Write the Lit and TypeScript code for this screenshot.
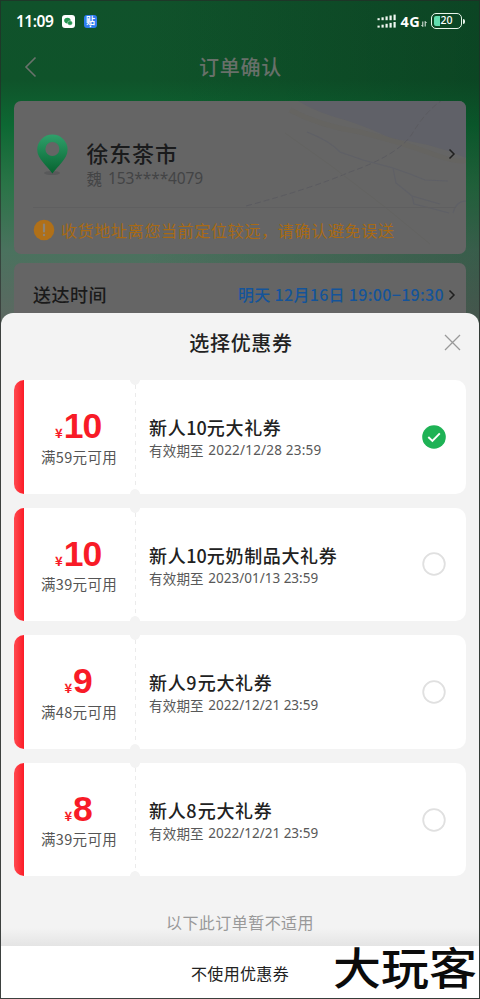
import { LitElement, html, css, svg } from "lit";
import { customElement } from "lit/decorators.js";

const BASE_FONT = css`"Noto Sans CJK SC", "Noto Sans", sans-serif`;

interface Coupon {
  amount: number;
  threshold: number;
  name: [string, string, string];
  expires: string;
}

const COUPONS: Coupon[] = [
  { amount: 10, threshold: 59, name: ["新人", "10", "元大礼券"], expires: "2022/12/28 23:59" },
  { amount: 10, threshold: 39, name: ["新人", "10", "元奶制品大礼券"], expires: "2023/01/13 23:59" },
  { amount: 9, threshold: 48, name: ["新人", "9", "元大礼券"], expires: "2022/12/21 23:59" },
  { amount: 8, threshold: 39, name: ["新人", "8", "元大礼券"], expires: "2022/12/21 23:59" },
];

@customElement("status-bar")
class StatusBar extends LitElement {
  static styles = css`
    :host { display: flex; align-items: center; height: 42px; padding: 0 15px 0 16px; box-sizing: border-box; color: #fff; }
    .time { font: 600 15.5px/20px "Noto Sans", sans-serif; letter-spacing: -0.5px; width: 46px; white-space: nowrap; }
    .app { display: block; width: 13px; height: 13px; }
    .wechat { margin: 0 9px 0 0; }
    .grow { flex: 1; }
    .signal { display: block; width: 20px; height: 16px; margin-right: 4px; }
    .net { font: 700 14.5px/20px "Noto Sans", sans-serif; letter-spacing: 0.3px; }
    .updown { display: block; width: 6px; height: 8px; margin: 5px 4px 0 1px; }
    .battery { display: flex; align-items: center; }
    .cell { box-sizing: border-box; width: 31px; height: 16px; border: 1.5px solid #e8f5ea; border-radius: 5px; padding: 1.5px; position: relative; }
    .level { width: 6px; height: 10px; border-radius: 2px 0 0 2px; background: #62dcae; }
    .pct { position: absolute; inset: 0; font: 500 10.5px/13px "Noto Sans", sans-serif; text-align: center; }
    .tip { width: 2px; height: 5px; margin-left: 1px; border-radius: 0 2px 2px 0; background: #e8f5ea; }
    .tag { font: 700 9px "Noto Sans CJK SC", sans-serif; }
  `;
  render() {
    const bars = [0, 1, 2, 3, 4];
    return html`
      <span class="time">11:09</span>
      <svg class="app wechat" viewBox="0 0 13 13">
        <rect width="13" height="13" rx="3" fill="#fff" />
        <ellipse cx="5.4" cy="5.6" rx="3.2" ry="2.8" fill="#23944f" />
        <ellipse cx="8" cy="8" rx="2.5" ry="2.2" fill="#23944f" stroke="#fff" stroke-width=".4" />
      </svg>
      <svg class="app" viewBox="0 0 13 13">
        <rect width="13" height="13" rx="3" fill="#2f7df0" />
        <text class="tag" x="6.5" y="9" text-anchor="middle" fill="#fff">贴</text>
        <circle cx="6.5" cy="11.3" r=".9" fill="#fff" />
      </svg>
      <span class="grow"></span>
      <svg class="signal" viewBox="0 0 20 16">
        ${bars.map((i) => svg`
          <rect x=${0.5 + i * 4} y=${5.2 - i * 0.9} width="2.2" height=${2 + i * 0.9} fill="#f0f7f1" />
          <rect x=${0.5 + i * 4} y=${12.6 - i * 0.9} width="2.2" height=${2 + i * 0.9} fill="#f0f7f1" />`)}
      </svg>
      <span class="net">4G</span>
      <svg class="updown" viewBox="0 0 6 8">
        <path d="M1.8 1.5V6.5L.5 5M4.2 6.5V1.5L5.5 3" fill="none" stroke="#fff" stroke-width=".9" />
      </svg>
      <span class="battery">
        <span class="cell"><div class="level"></div><span class="pct">20</span></span>
        <span class="tip"></span>
      </span>
    `;
  }
}

@customElement("address-card")
class AddressCard extends LitElement {
  static styles = css`
    :host { display: block; position: relative; height: 152.5px; border-radius: 7px; background: #656565; overflow: hidden; font-family: ${BASE_FONT}; }
    .map { position: absolute; top: 0; right: 0; width: 226px; height: 152px; }
    .content { position: relative; display: flex; flex-direction: column; height: 100%; box-sizing: border-box; padding: 0 10px 0 18.5px; }
    .place { display: flex; height: 106px; align-items: flex-start; border-bottom: 1px solid #5f5f60; }
    .pin { width: 38px; height: 44px; margin: 31px 16px 0 0; flex: none; display: block; }
    .who { flex: 1; padding-top: 35.5px; }
    .name { font-size: 22px; line-height: 30px; font-weight: 500; letter-spacing: 0.8px; color: #1a1b1c; }
    .phone { font-size: 15.5px; line-height: 23px; color: #434445; display: flex; gap: 6px; }
    .digits { font-family: "Noto Sans", sans-serif; font-size: 15.5px; letter-spacing: -0.1px; }
    .arrow { width: 8px; height: 12px; margin-top: 47px; }
    .warn { display: flex; align-items: center; height: 44.5px; }
    .badge { width: 22px; height: 22px; margin-right: 6.5px; }
    .msg { font-size: 16px; letter-spacing: 0.68px; color: #a86a14; white-space: nowrap; }
  `;
  render() {
    return html`
      <svg class="map" viewBox="240 101 226 152" fill="none">
        <path d="M298 101Q318 113 345 120Q370 128 392 139Q430 142 466 158V101Z" fill="#606168" />
        <path d="M290 110Q320 126 360 132Q400 142 430 153T466 160" stroke="#656461" stroke-width="5" />
        <path d="M246 206Q310 189 350 172Q398 155 412 134Q425 112 441 101" stroke="#5b5b60" stroke-dasharray="6 3" />
        <path d="M307 132Q330 141 340 152L363 160L393 168L396 183L412 196L440 204M393 168L410 174L425 180L448 181M412 196L414 204L430 208L449 213M453 213Q456 201 466 201" stroke="#5f6066" stroke-width="1.2" />
        <path d="M285 133L330 165L385 207L430 244" stroke="#636361" />
      </svg>
      <div class="content">
        <div class="place">
          <svg class="pin" viewBox="0 0 38 44">
            <defs>
              <linearGradient id="g" x1="0" y1="0" x2="0" y2="1">
                <stop offset="0" stop-color="#2fa06a" /><stop offset="1" stop-color="#066330" />
              </linearGradient>
            </defs>
            <ellipse cx="19" cy="41" rx="8" ry="2" fill="#58595a" />
            <path d="M19.400 41.500C15 35 4.200 27 4.200 17.800A15.200 15.200 0 0 1 34.600 17.800C34.600 27 24 35 19.400 41.500Z" fill="url(#g)" />
            <circle cx="19.400" cy="17" r="7" fill="#656565" />
          </svg>
          <div class="who">
            <div class="name">徐东茶市</div>
            <div class="phone"><span>魏</span><span class="digits">153****4079</span></div>
          </div>
          <svg class="arrow" viewBox="0 0 8 12"><path d="M1.500 1.500L6 6L1.500 10.500" fill="none" stroke="#202020" stroke-width="1.500" /></svg>
        </div>
        <div class="warn">
          <svg class="badge" viewBox="0 0 22 22">
            <circle cx="11" cy="11" r="10.300" fill="#b07018" />
            <path d="M11 5.500V12.500" stroke="#8c8478" stroke-width="2.200" stroke-linecap="round" />
            <circle cx="11" cy="16" r="1.200" fill="#8c8478" />
          </svg>
          <span class="msg">收货地址离您当前定位较远，请确认避免误送</span>
        </div>
      </div>
    `;
  }
}

@customElement("coupon-card")
class CouponCard extends LitElement {
  static properties = { coupon: { attribute: false }, selected: { type: Boolean } };
  declare coupon: Coupon;
  declare selected: boolean;
  static styles = css`
    :host { display: flex; height: 113.700px; font-family: ${BASE_FONT}; }
    .value, .info { box-sizing: border-box; }
    .value {
      width: 120.500px; display: flex; border-radius: 10px 0 0 10px; overflow: hidden;
      background: radial-gradient(circle at 100% 0, #f3f3f3 4.500px, transparent 5.200px), radial-gradient(circle at 100% 100%, #f3f3f3 4.500px, #fff 5.200px);
    }
    .stripe { width: 9.500px; background: linear-gradient(90deg, #ff4a50, #fb1c27); }
    .worth { flex: 1; text-align: center; padding-top: 26px; }
    .amount { display: flex; justify-content: center; align-items: baseline; height: 40px; color: #f81b27; font: 700 35.500px/40px "Liberation Sans", sans-serif; letter-spacing: -0.800px; padding-right: 1.500px; }
    .yen { font: 700 13px/20px "Noto Sans CJK SC", sans-serif; letter-spacing: 0; margin-right: 1px; }
    .limit { font-size: 14.500px; line-height: 20px; margin-top: 0.500px; letter-spacing: 0.350px; color: #555; white-space: nowrap; }
    .info {
      flex: 1; display: flex; align-items: center; padding: 0 20px 0 14.500px; border-radius: 0 10px 10px 0;
      background:
        repeating-linear-gradient(180deg, #ebebeb 0 4px, transparent 4px 8px) 0 5px / 1px 104px no-repeat,
        radial-gradient(circle at 0 0, #f3f3f3 4.500px, transparent 5.200px),
        radial-gradient(circle at 0 100%, #f3f3f3 4.500px, #fff 5.200px);
    }
    .text { flex: 1; padding-top: 2.500px; }
    .name { font-size: 18px; line-height: 25px; font-weight: 500; letter-spacing: 0.650px; color: #212121; white-space: nowrap; }
    .name span { letter-spacing: 0; }
    .name .single { letter-spacing: 1.200px; }
    .date { display: flex; gap: 4.500px; font-size: 13.500px; line-height: 21px; letter-spacing: 0.200px; color: #585858; white-space: nowrap; }
    .when { font-family: "Noto Sans", sans-serif; font-size: 13.500px; }
    .tight { letter-spacing: 0; }
    .radio { width: 24px; height: 24px; display: block; }
  `;
  render() {
    const [head, count, tail] = this.coupon.name;
    const narrow = this.coupon.expires.split("1").length > 2;
    return html`
      <div class="value">
        <div class="stripe"></div>
        <div class="worth">
          <div class="amount"><span class="yen">¥</span>${this.coupon.amount}</div>
          <div class="limit">满${this.coupon.threshold}元可用</div>
        </div>
      </div>
      <div class="info">
        <div class="text">
          <div class="name">${head}<span class=${count.length === 1 ? "single" : ""}>${count}</span>${tail}</div>
          <div class="date"><span>有效期至</span><span class=${narrow ? "when tight" : "when"}>${this.coupon.expires}</span></div>
        </div>
        <svg class="radio" viewBox="0 0 24 24" fill="none">
          ${this.selected
            ? svg`<circle cx="12" cy="12" r="11.800" fill="#1eb255" /><path d="M6.300 12L10.400 16L17.800 8.300" stroke="#fff" stroke-width="1.900" />`
            : svg`<circle cx="12" cy="12" r="10.800" stroke="#e0e0e0" stroke-width="1.800" />`}
        </svg>
      </div>
    `;
  }
}

@customElement("app-root")
class AppRoot extends LitElement {
  static styles = css`
    :host { display: block; position: relative; width: 480px; height: 999px; overflow: hidden; font-family: ${BASE_FONT};
      background: linear-gradient(90deg, transparent 30%, rgba(0, 30, 15, 0.250)), linear-gradient(180deg, #10522b 0, #0f532a 80px, #0d6833 125px, #2a7447 185px, #4a725e 250px, #5c6861 320px); }
    .nav { display: flex; align-items: center; height: 59px; padding: 0 24px 10px; box-sizing: border-box; color: #68706a; }
    .back { width: 14px; height: 22px; }
    .title { flex: 1; text-align: center; font-size: 20px; letter-spacing: 0.700px; font-weight: 500; padding-right: 13px; }
    .page { display: flex; flex-direction: column; gap: 9.500px; padding: 0 14px; }
    .slot { height: 70px; border-radius: 7px; background: #656565; box-sizing: border-box; padding: 16px 10px 0 19px; display: flex; align-items: flex-start; line-height: 30px; }
    .slot-label { flex: 1; font-size: 18px; letter-spacing: 0.500px; font-weight: 500; color: #1a1a1a; }
    .slot-time { font-size: 16px; letter-spacing: 0.320px; font-weight: 500; color: #14549a; }
    .arrow { width: 8px; height: 12px; margin: 10px 0 0 4px; }
    .sheet { position: absolute; left: 1px; right: 1px; top: 313px; bottom: 1px; display: flex; flex-direction: column; background: #f3f3f3; border-radius: 12px 12px 0 0; overflow: hidden; }
    .sheet-head { display: flex; align-items: center; height: 67px; padding: 0 18px 8px 0; box-sizing: border-box; }
    .sheet-title { flex: 1; text-align: center; font-size: 20px; letter-spacing: 0.700px; font-weight: 500; color: #222; padding-left: 37px; }
    .close { width: 17px; height: 17px; }
    .list { display: flex; flex-direction: column; gap: 13.900px; padding: 0 13px; }
    .hint { flex: 1; padding-top: 34px; text-align: center; font-size: 16px; line-height: 24px; letter-spacing: 0.450px; color: #999; background: linear-gradient(0deg, #e4e4e4, #f3f3f3 18px); }
    .foot { height: 52px; background: #fff; display: flex; align-items: center; justify-content: center; font-size: 16px; letter-spacing: 0.350px; color: #222; box-sizing: border-box; padding-top: 1px; }
    .mark { position: absolute; left: 333px; top: 934px; font: 500 44px/64px "Noto Sans CJK SC", sans-serif; color: #0b0b0b; white-space: nowrap; transform: scaleX(1.090); transform-origin: 0 50%; }
    .edge { position: absolute; inset: 0; border: 1px solid rgba(40, 40, 40, 0.600); pointer-events: none; }
  `;
  render() {
    return html`
      <status-bar></status-bar>
      <div class="nav">
        <svg class="back" viewBox="0 0 14 22"><path d="M11.500 1.500L2 11L11.500 20.500" fill="none" stroke="#6a726c" stroke-width="1.600" /></svg>
        <div class="title">订单确认</div>
      </div>
      <div class="page">
        <address-card></address-card>
        <div class="slot">
          <span class="slot-label">送达时间</span>
          <span class="slot-time">明天 12月16日 19:00−19:30</span>
          <svg class="arrow" viewBox="0 0 8 12"><path d="M1.500 1.500L6 6L1.500 10.500" fill="none" stroke="#202020" stroke-width="1.500" /></svg>
        </div>
      </div>
      <div class="sheet">
        <div class="sheet-head">
          <div class="sheet-title">选择优惠券</div>
          <svg class="close" viewBox="0 0 17 17"><path d="M1 1L16 16M16 1L1 16" stroke="#999" stroke-width="1.300" /></svg>
        </div>
        <div class="list">
          ${COUPONS.map((c, i) => html`<coupon-card .coupon=${c} .selected=${i === 0}></coupon-card>`)}
        </div>
        <div class="hint">以下此订单暂不适用</div>
        <div class="foot">不使用优惠券</div>
      </div>
      <div class="mark">大玩客</div>
      <div class="edge"></div>
    `;
  }
}
